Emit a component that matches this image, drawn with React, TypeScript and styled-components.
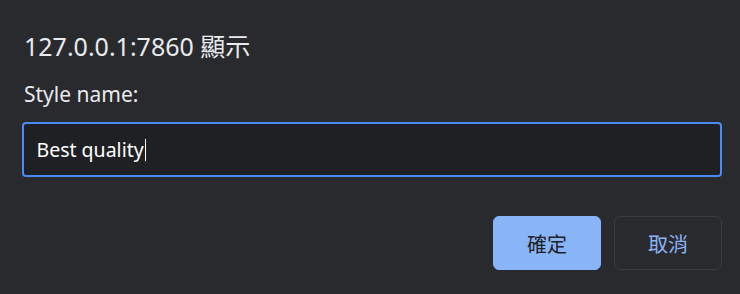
import styled, { createGlobalStyle } from 'styled-components';

const GlobalStyle = createGlobalStyle`
  html, body {
    margin: 0;
    padding: 0;
    background: #292a2d;
  }
  body {
    font-family: 'Noto Sans', 'Noto Sans CJK TC', sans-serif;
    color: #e8eaed;
  }
`;

const Dialog = styled.div`
  width: 740px;
  height: 294px;
  box-sizing: border-box;
  padding: 30px 18px 0 22px;
  display: flex;
  flex-direction: column;
  background: #292a2d;
`;

const Title = styled.div`
  font-size: 25px;
  line-height: 32px;
  padding-left: 2px;
  color: #e8eaed;
`;

const Label = styled.div`
  margin-top: 20px;
  font-size: 21px;
  line-height: 24px;
  padding-left: 2px;
  color: #e8eaed;
`;

const Input = styled.div`
  margin-top: 16px;
  height: 55px;
  box-sizing: border-box;
  border: 2.5px solid #4a8af4;
  border-radius: 4px;
  background: #1f2023;
  display: flex;
  align-items: center;
  padding: 0 12.5px;
  font-size: 19.5px;
  color: #ffffff;
`;

const Caret = styled.span`
  display: inline-block;
  width: 1.5px;
  height: 22px;
  margin-left: 1px;
  background: #ffffff;
`;

const Actions = styled.div`
  margin-top: 39px;
  display: flex;
  justify-content: flex-end;
  gap: 13px;
`;

const Button = styled.button<{ $primary?: boolean }>`
  width: 108px;
  height: 54px;
  box-sizing: border-box;
  border-radius: 6px;
  font-family: 'Noto Sans CJK TC', sans-serif;
  font-size: 20px;
  cursor: pointer;
  border: 1px solid ${(p) => (p.$primary ? '#8ab4f8' : '#3c3d40')};
  background: ${(p) => (p.$primary ? '#8ab4f8' : 'transparent')};
  color: ${(p) => (p.$primary ? '#202124' : '#8ab4f8')};
`;

export default function App() {
  return (
    <>
      <GlobalStyle />
      <Dialog>
        <Title>127.0.0.1:7860 顯示</Title>
        <Label>Style name:</Label>
        <Input>
          Best quality
          <Caret />
        </Input>
        <Actions>
          <Button $primary>確定</Button>
          <Button>取消</Button>
        </Actions>
      </Dialog>
    </>
  );
}
